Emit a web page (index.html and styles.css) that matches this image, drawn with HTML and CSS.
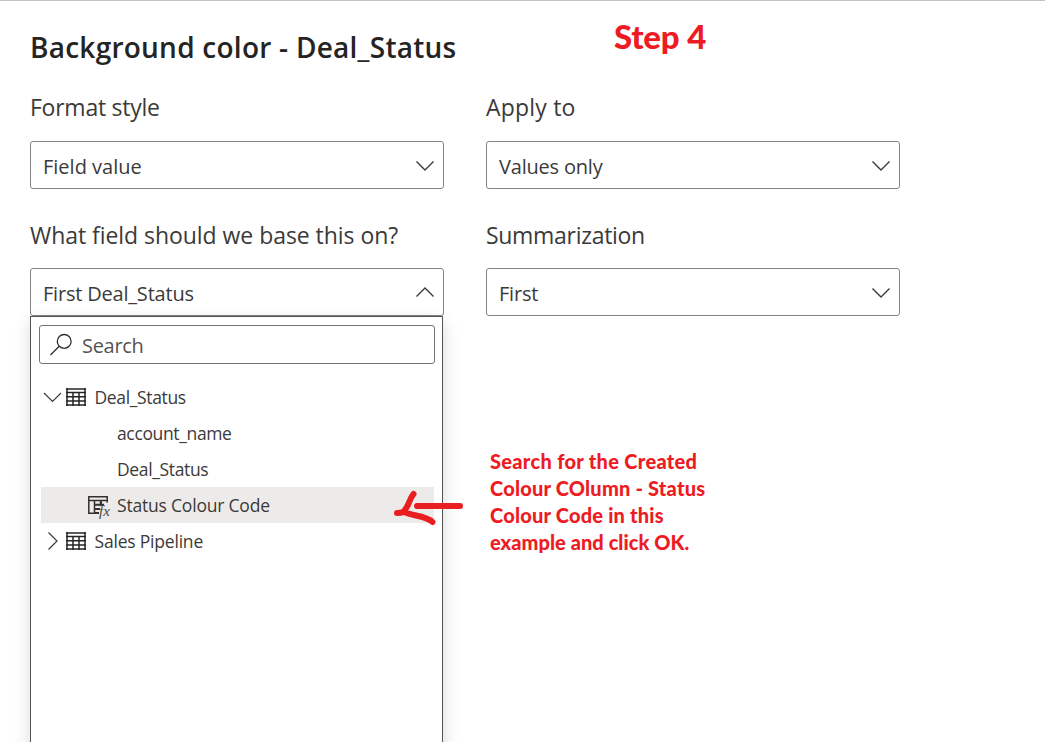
FILE: index.html
```
<!DOCTYPE html>
<html lang="en">
<head>
<meta charset="utf-8">
<title>Background color - Deal_Status</title>
<link rel="stylesheet" href="styles.css">
</head>
<body>
<main class="dialog">
  <header class="header">
    <h1 class="title">Background color - Deal_Status</h1>
    <p class="step">Step 4</p>
  </header>
  <div class="form">
    <section class="field">
      <div class="label t-format">Format style</div>
      <div class="select"><span class="t-fv">Field value</span>
        <svg class="chev" viewBox="0 0 20 12"><path d="M1.5 1.5 10 10 18.5 1.5"/></svg></div>
    </section>
    <section class="field">
      <div class="label t-apply">Apply to</div>
      <div class="select"><span class="t-vo">Values only</span>
        <svg class="chev" viewBox="0 0 20 12"><path d="M1.5 1.5 10 10 18.5 1.5"/></svg></div>
    </section>
    <section class="field">
      <div class="label t-what">What field should we base this on?</div>
      <div class="select"><span class="t-fds">First Deal_Status</span>
        <svg class="chev" viewBox="0 0 20 12"><path d="M1.5 9.5 10 1 18.5 9.5"/></svg></div>
      <div class="menu">
        <div class="search">
          <svg class="lens" viewBox="0 0 24 24"><circle cx="15.2" cy="8.4" r="6.9"/><path d="M10.2 13.3 1.5 22"/></svg>
          <span class="t-search">Search</span>
        </div>
        <div class="tree">
          <div class="row">
            <svg class="twist" viewBox="0 0 20 20"><path d="M2 6 10.5 14.5 19 6"/></svg>
            <svg class="table" viewBox="0 0 20 18"><path d="M1 0V18M7 4V18M13 4V18M19 0V18M0 .9H20M0 4.6H20M0 8.8H20M0 13H20M0 17.1H20"/></svg>
            <span class="name t-ds">Deal_Status</span>
          </div>
          <div class="row leaf"><span class="t-an">account_name</span></div>
          <div class="row leaf"><span class="t-ds">Deal_Status</span></div>
          <div class="row selected">
            <svg class="calc" viewBox="0 0 24 22"><path d="M.8 18V.8H19.2V6.5M0 4.4H20M6.5 5V17.3M13 5V9.5M0 17.3H10.5"/><path class="thick" d="M6.5 8.8H16M6.5 13H12M7 17H11M12.8 5V10"/><text x="11" y="19.500">fx</text></svg>
            <span class="t-scc">Status Colour Code</span>
          </div>
          <div class="row">
            <svg class="twist" viewBox="0 0 20 20"><path d="M6.5 1.5 15 10 6.5 18.5"/></svg>
            <svg class="table" viewBox="0 0 20 18"><path d="M1 0V18M7 4V18M13 4V18M19 0V18M0 .9H20M0 4.6H20M0 8.8H20M0 13H20M0 17.1H20"/></svg>
            <span class="name t-sp">Sales Pipeline</span>
          </div>
        </div>
      </div>
    </section>
    <section class="field">
      <div class="label t-sum">Summarization</div>
      <div class="select"><span class="t-first">First</span>
        <svg class="chev" viewBox="0 0 20 12"><path d="M1.5 1.5 10 10 18.5 1.5"/></svg></div>
      <p class="note"><span class="n1">Search for the Created</span><br><span class="n2">Colour COlumn - Status</span><br><span class="n3">Colour Code in this</span><br><span class="n4">example and click OK.</span></p>
    </section>
  </div>
  <svg class="arrow" viewBox="0 0 90 50"><path d="M32 26H75M28.5 14C24 19 24 27 18 32Q16 33 12 33M19 32C28 36 42 36 47.5 42"/></svg>
</main>
</body>
</html>
```
FILE: styles.css
```
* { box-sizing: border-box; }
body { margin: 0; background: #fff; font-family: "Open Sans", "Noto Sans", sans-serif; color: #3b3a39; }
.dialog { position: relative; height: 742px; overflow: hidden; border-top: 1px solid #c3c3c3; padding: 0 0 0 30px; }
.header { display: grid; grid-template-columns: 584px auto; height: 87px; }
.title { margin: 0; padding-top: 26px; font-size: 28px; line-height: 40px; font-weight: 600; color: #252423; white-space: nowrap; letter-spacing: .25px; }
.step { margin: 0; padding-top: 15px; font: 900 33px/40px Lato, sans-serif; color: #ed1c24; white-space: nowrap; letter-spacing: -.2px; }
.form { display: grid; grid-template-columns: 414px 414px; column-gap: 42px; grid-template-rows: 127px auto; }
.field { position: relative; }
.label { height: 53px; padding-top: 3px; font-size: 23px; line-height: 32px; white-space: nowrap; }
.label.t-what, .label.t-sum { padding-top: 4px; }
.select { display: flex; align-items: center; justify-content: space-between; width: 414px; height: 48px; padding: 2px 8px 0 12px; border: 1px solid #868482; border-radius: 3px; font-size: 20px; white-space: nowrap; }
.chev { width: 20px; height: 12px; margin-bottom: 1px; fill: none; stroke: #3b3a39; stroke-width: 1.4; }
.menu { position: absolute; top: 101px; left: 0; width: 413px; height: 440px; padding: 8px; border: 1px solid #555453; background: #fff; box-shadow: 0 6px 16px rgba(0,0,0,.15); }
.search { display: flex; align-items: center; width: 396px; height: 39px; padding-left: 9px; gap: 9px; border: 1px solid #767472; border-radius: 3px; font-size: 20px; color: #555351; }
.lens { width: 24px; height: 24px; fill: none; stroke: #323130; stroke-width: 1.3; }
.tree { margin: 15px 0 0 2px; font-size: 17.5px; }
.row { display: flex; align-items: center; height: 36px; width: 393px; padding-left: 1px; white-space: nowrap; }
.twist { width: 20px; height: 20px; fill: none; stroke: #3b3a39; stroke-width: 1.2; }
.table { width: 20px; height: 18px; margin: 0 8.5px 0 4px; fill: none; stroke: #252423; stroke-width: 1.5; }
.leaf { padding-left: 76px; }
.selected { padding-left: 47px; background: #edebe9; }
.calc { width: 24px; height: 22px; margin: 3px 5px 0 0; fill: none; stroke: #323130; stroke-width: 1.5; overflow: visible; }
.calc .thick { stroke-width: 2; }
.calc text { font: italic 15px "Liberation Serif", serif; fill: #484644; stroke: none; }
.note { margin: 0; padding: 132px 0 0 4px; font: 900 20px/27px Lato, sans-serif; color: #ed1c24; white-space: nowrap; }
.arrow { position: absolute; left: 385px; top: 479px; width: 90px; height: 50px; fill: none; stroke: #e81e20; stroke-width: 6; stroke-linecap: round; stroke-linejoin: round; }

/* Tracking per text */
.t-format { letter-spacing: -.25px; }
.t-apply { letter-spacing: .2px; }
.t-what { letter-spacing: -.05px; }
.t-sum { letter-spacing: -.3px; }
.t-vo, .t-fds, .t-first { letter-spacing: -.2px; }
.t-search { letter-spacing: -.3px; padding-top: 2px; }
.t-ds, .t-an { letter-spacing: -.36px; }
.t-scc, .t-sp { letter-spacing: -.2px; }
.n1 { letter-spacing: .3px; }
.n2, .n3 { letter-spacing: .2px; }
.n4 { letter-spacing: .05px; }
```
